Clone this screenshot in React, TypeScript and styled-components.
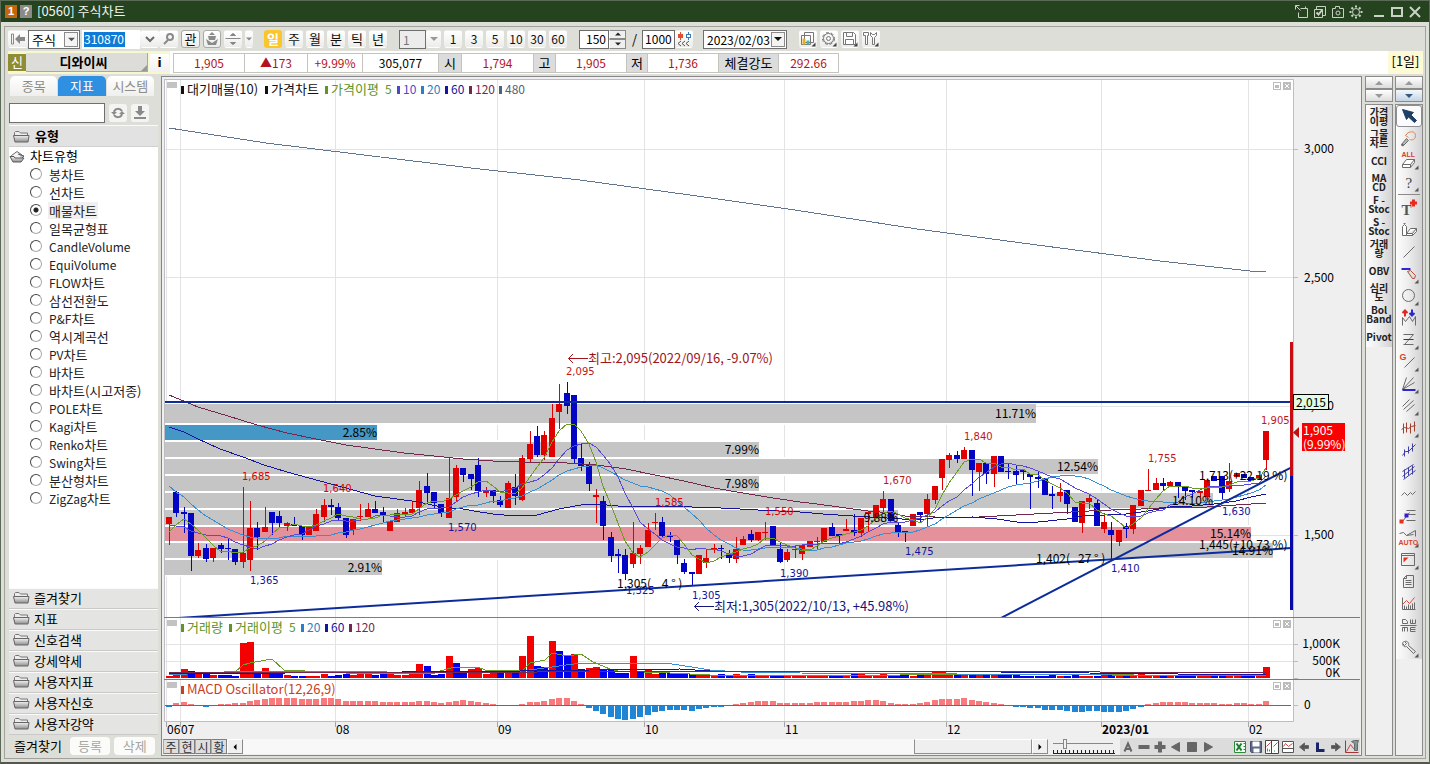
import React from "react";
import styled, { createGlobalStyle } from "styled-components";

const UI = '"Noto Sans CJK KR", sans-serif';

const GlobalStyle = createGlobalStyle`
  * { box-sizing: border-box; }
  body { margin: 0; font-family: ${UI}; font-size: 13px; line-height: 18px; color: #000; }
  button, input, select { font: inherit; color: inherit; margin: 0; padding: 0; border-radius: 0; }
  button { border: 0; background: none; }
  svg { display: block; flex: none; }
`;

/* ---------- window frame ---------- */

const Window = styled.div`
  min-height: 100vh;
  display: flex;
  flex-direction: column;
  background: #deded8;
  border: 1px solid #5b6a57;
  border-bottom: 2px solid #55564f;
`;

const TitleBar = styled.header`
  height: 21px;
  flex: none;
  display: flex;
  align-items: center;
  padding: 0 5px 0 4px;
  background: #24431e;
  color: #f0f4ee;
`;

const Title = styled.h1`
  margin: 0 auto 0 2px;
  font-size: 13px;
  font-weight: 400;
  line-height: 18px;
  padding-bottom: 2px;
`;

const Badge = styled.span<{ $bg: string }>`
  width: 12px;
  height: 13px;
  margin-right: 3px;
  background: ${(p) => p.$bg};
  color: #fff;
  font: bold 11px/13px "Liberation Sans", sans-serif;
  text-align: center;
`;

const TitleButton = styled.button`
  width: 18px;
  height: 18px;
  display: grid;
  place-items: center;
  color: #c9d2c5;
`;

const Body = styled.div`
  flex: 1;
  display: flex;
  padding: 4px 3px 3px;
`;

const Panel = styled.main`
  flex: 1;
  min-width: 0;
  display: flex;
  flex-direction: column;
  border: 1px solid #a2a29d;
  padding: 0 2px 2px 3px;
`;

/* ---------- toolbar ---------- */

const Toolbar = styled.div`
  height: 24px;
  flex: none;
  display: flex;
  align-items: center;
`;

const Spacer = styled.span<{ $w: number }>`
  flex: none;
  width: ${(p) => p.$w}px;
`;

const ToolButton = styled.button<{ $w?: number; $active?: boolean; $edge?: boolean; $tight?: boolean; $digits?: boolean }>`
  flex: none;
  width: ${(p) => p.$w ?? 18}px;
  height: 18px;
  margin-right: ${(p) => (p.$tight ? 0 : 3)}px;
  display: grid;
  place-items: center;
  border-radius: 3px;
  border: 1px solid ${(p) => (p.$edge ? "#a9a9a5" : "transparent")};
  background: ${(p) => (p.$active ? "#fbc52c" : "linear-gradient(#fff, #ececea)")};
  color: ${(p) => (p.$active ? "#fff" : "#111")};
  font-size: ${(p) => (p.$digits ? 12 : 13)}px;
  font-weight: ${(p) => (p.$active ? 700 : 400)};
  line-height: 16px;
`;

const SelectBox = styled.span<{ $w: number; $muted?: boolean; $digits?: boolean }>`
  flex: none;
  display: flex;
  align-items: center;
  width: ${(p) => p.$w}px;
  height: 19px;
  border: 1px solid #707070;
  background: ${(p) => (p.$muted ? "#ececec" : "#fff")};
  color: ${(p) => (p.$muted ? "#777" : "#000")};
  font-size: ${(p) => (p.$digits ? 12 : 13)}px;
  select {
    flex: 1;
    min-width: 0;
    height: 17px;
    border: 0;
    padding-left: 3px;
    background: transparent;
    appearance: none;
    outline: 0;
  }
`;

const Caret = styled.span<{ $boxed?: boolean }>`
  width: 14px;
  height: 15px;
  margin-right: 1px;
  display: grid;
  place-items: center;
  border: ${(p) => (p.$boxed ? "1px solid #8a8a8a" : "0")};
  background: ${(p) => (p.$boxed ? "#f4f4f2" : "transparent")};
`;

const CodeField = styled.span`
  flex: none;
  display: flex;
  align-items: center;
  width: 58px;
  height: 19px;
  margin-left: 2px;
  padding-left: 2px;
  background: #fff;
  input {
    width: 41px;
    height: 15px;
    border: 0;
    background: #0f7bd6;
    color: #fff;
    outline: 0;
    font-size: 12px;
  }
`;

const NumberField = styled.input<{ $w: number; $right?: boolean }>`
  flex: none;
  width: ${(p) => p.$w}px;
  height: 19px;
  border: 1px solid #6c6c6c;
  padding: 0 2px 1px;
  background: #fff;
  font-size: 12px;
  text-align: ${(p) => (p.$right ? "right" : "left")};
  outline: 0;
`;

const Stepper = styled.span`
  flex: none;
  width: 17px;
  height: 19px;
  display: flex;
  flex-direction: column;
  button {
    flex: 1;
    display: grid;
    place-items: center;
    background: #efefed;
    border: 1px solid #8a8a8a;
    border-left-color: #fff;
  }
`;

/* ---------- quote strip ---------- */

const QuoteStrip = styled.div`
  height: 23px;
  flex: none;
  display: flex;
  align-items: center;
  background: #fff;
`;

const StockName = styled.div`
  flex: none;
  display: flex;
  align-items: center;
  width: 162px;
  height: 23px;
  background: #f7f8cf;
`;

const NewMark = styled.span`
  width: 18px;
  height: 17px;
  background: #8f8c34;
  color: #fff;
  text-align: center;
  line-height: 16px;
`;

const NameButton = styled.button`
  width: 122px;
  height: 19px;
  display: flex;
  align-items: flex-end;
  background: #dcdcd8;
  border-right: 1px solid #a8a8a0;
  border-bottom: 1px solid #a8a8a0;
  font-weight: 700;
  line-height: 18px;
  span { flex: 1; }
`;

const InfoButton = styled.button`
  width: 19px;
  height: 18px;
  margin-left: 2px;
  background: linear-gradient(#fff, #f0f0f0);
  border-radius: 2px;
  font: bold 12px/18px "DejaVu Sans", sans-serif;
`;

const QuoteTable = styled.table`
  flex: none;
  width: 665px;
  margin-left: 3px;
  border-collapse: collapse;
  table-layout: fixed;
  th, td {
    height: 19px;
    padding: 0;
    border: 1px solid #c4c4bc;
    font-weight: 400;
    line-height: 17px;
    text-align: center;
  }
  th { background: #dcdcdc; }
`;

const Quote = styled.td<{ $tone?: string }>`
  color: ${(p) => p.$tone ?? "#b3141c"};
  font-size: 12px;
`;

const Period = styled.span`
  width: 35px;
  height: 23px;
  margin-left: auto;
  background: #fdfbd5;
  text-align: center;
  line-height: 20px;
`;

/* ---------- work area ---------- */

const Work = styled.div`
  flex: 1;
  min-height: 680px;
  display: flex;
  margin-top: 2px;
`;

const Sidebar = styled.aside`
  flex: none;
  width: 150px;
  margin-right: 3px;
  display: flex;
  flex-direction: column;
`;

const Tabs = styled.div`
  display: flex;
  gap: 1px;
  height: 20px;
  margin: 0 4px 6px 2px;
`;

const Tab = styled.button<{ $active?: boolean }>`
  flex: 1;
  border-radius: 5px 5px 0 0;
  background: ${(p) => (p.$active ? "#2f8fe0" : "linear-gradient(#fff, #efefed)")};
  color: ${(p) => (p.$active ? "#fff" : "#8c8c88")};
`;

const SearchRow = styled.div`
  display: flex;
  align-items: center;
  gap: 4px;
  height: 22px;
  padding-left: 1px;
  input {
    width: 96px;
    height: 20px;
    border: 1px solid #6f6f6f;
    background: #fff;
  }
`;

const SmallButton = styled.button`
  width: 18px;
  height: 18px;
  display: grid;
  place-items: center;
  border-radius: 3px;
  background: #f4f4f2;
`;

const TypeHeader = styled.h2`
  display: flex;
  align-items: center;
  gap: 5px;
  height: 22px;
  margin: 1px 0 0 1px;
  padding-left: 4px;
  background: #e2e2e2;
  border-top: 1px solid #fafafa;
  border-bottom: 1px solid #d0d0ce;
  font: bold 13px/20px ${UI};
`;

const Tree = styled.div`
  flex: 1;
  margin-left: 1px;
  background: #fff;
`;

const TreeRoot = styled.div`
  display: flex;
  align-items: center;
  gap: 4px;
  height: 18px;
`;

const TreeItem = styled.label<{ $selected?: boolean }>`
  display: flex;
  align-items: center;
  gap: 6px;
  height: 18px;
  padding-left: 21px;
  color: #222;
  input {
    width: 12px;
    height: 12px;
    appearance: none;
    border: 1px solid #444;
    border-right-color: #aaa;
    border-bottom-color: #aaa;
    border-radius: 50%;
    background: #fff;
  }
  input:checked { background: radial-gradient(#222 2px, #fff 3px); }
  > span { padding: 0 1px; height: 17px; line-height: 17px; background: ${(p) => (p.$selected ? "#f0f0f0" : "none")}; }
  small { font-size: 12px; }
`;

const FolderRow = styled.button`
  display: flex;
  align-items: center;
  gap: 4px;
  height: 21px;
  flex: none;
  margin-left: 1px;
  padding: 0 0 2px 4px;
  background: #e4e4e3;
  border-top: 1px solid #fafafa;
  border-bottom: 1px solid #c9c9c7;
  line-height: 17px;
`;

const SideFooter = styled.div`
  display: flex;
  align-items: center;
  height: 21px;
  flex: none;
  padding-left: 6px;
  span { width: 55px; }
`;

const GhostButton = styled.button`
  width: 41px;
  height: 18px;
  margin-left: 1px;
  margin-right: 3px;
  border-radius: 4px;
  background: #fbfbfa;
  color: #a6a69f;
`;

const ChartPanel = styled.section`
  flex: 1;
  min-width: 0;
  display: flex;
  flex-direction: column;
  margin-right: 3px;
  padding: 1px 1px 0;
  border: 1px solid #85858b;
  background: #efefef;
`;

const ChartSvg = styled.svg`
  flex: 1;
  width: 100%;
  min-height: 0;
`;

const Label = styled.text<{ $size?: number; $bold?: boolean }>`
  font-family: ${(p) => (p.$size === 10 ? '"DejaVu Sans", sans-serif' : UI)};
  font-size: ${(p) => p.$size ?? 12}px;
  font-weight: ${(p) => (p.$bold ? 700 : 400)};
  white-space: pre;
`;

const BottomBar = styled.div`
  height: 17px;
  flex: none;
  display: flex;
  align-items: center;
`;

const MiniTab = styled.button`
  width: 16px;
  height: 15px;
  border: 1px solid #7f7f7f;
  border-left-color: #aaa;
  background: #dedede;
  color: #333;
  font-size: 12px;
  line-height: 12px;
`;

const ScrollArrow = styled.button`
  width: 16px;
  height: 15px;
  display: grid;
  place-items: center;
  border: 1px solid #8a8a8a;
  border-top-color: #fff;
  border-left-color: #fff;
  background: #f0f0f0;
`;

const ScrollTrack = styled.div`
  flex: 1;
  display: flex;
  justify-content: flex-end;
  height: 15px;
  background: #f8f8f8;
`;

const ScrollThumb = styled.div`
  width: 118px;
  height: 15px;
  border: 1px solid #8f8f8f;
  border-top-color: #fff;
  background: #efefef;
`;

const ZoomSlider = styled.div`
  width: 64px;
  height: 17px;
  margin: 0 4px;
  padding: 1px 0 1px 1px;
  display: flex;
  flex-direction: column;
  justify-content: space-between;
  input {
    width: 60px;
    height: 10px;
    margin: 0;
    appearance: none;
    background: linear-gradient(#888, #888) 0 4px / 100% 1px no-repeat;
  }
  input::-webkit-slider-thumb {
    appearance: none;
    width: 4px;
    height: 10px;
    border: 1px solid #888;
    background: #f2f2f2;
  }
`;

const ChartTools = styled.div`
  width: 240px;
  height: 17px;
  display: flex;
  background: #dcdcdc;
  button { width: 16px; height: 17px; display: grid; place-items: center; }
`;

const Rail = styled.nav`
  flex: none;
  width: 28px;
  display: flex;
  flex-direction: column;
  & + & { margin-left: 2px; }
`;

const RailArrow = styled.button<{ $on?: boolean }>`
  height: 13px;
  display: grid;
  place-items: center;
  border: 1px solid #8b8b8b;
  background: ${(p) => (p.$on ? "linear-gradient(#f4f8fc, #c4d4e4)" : "linear-gradient(#fff, #dcdcdc)")};
`;

const RailBody = styled.div`
  flex: 1;
  margin-top: 2px;
  border: 1px solid #8b8b8b;
  background: #efefef;
`;

const RailItems = styled.div`
  background: linear-gradient(90deg, #fdfdfd, #eeeeee 45%, #d2d2d4);
`;

const TextTool = styled.button`
  width: 26px;
  height: 22px;
  display: flex;
  flex-direction: column;
  justify-content: center;
  align-items: center;
  color: #222;
  font: bold 10px/9px ${UI};
`;

const IconTool = styled.button<{ $active?: boolean }>`
  width: 26px;
  height: 22px;
  display: grid;
  place-items: center;
  border: ${(p) => (p.$active ? "1px solid #8d8d95" : "0")};
  border-radius: 3px;
  background: ${(p) => (p.$active ? "#fbfbfb" : "none")};
  svg { overflow: visible; }
`;

const Divider = styled.hr`
  margin: 1px 2px;
  border: 0;
  border-top: 1px solid #8a8a8a;
  height: 2px;
`;

/* ---------- icons ---------- */

const Stroke = ({ w = 16, h = 16, color = "#6b6b6b", sw = 1, children }: { w?: number; h?: number; color?: string; sw?: number; children: React.ReactNode }) => (
  <svg width={w} height={h} viewBox={`0 0 ${w} ${h}`} fill="none" stroke={color} strokeWidth={sw}>
    <g transform={sw === 1 ? "translate(0.5 0.5)" : undefined}>{children}</g>
  </svg>
);

const Tri = ({ dir, color = "#555", s = 7 }: { dir: "up" | "down" | "left" | "right"; color?: string; s?: number }) => {
  const d = { up: "M0 6L4 2L8 6Z", down: "M0 2L4 6L8 2Z", left: "M6 0L2 4L6 8Z", right: "M2 0L6 4L2 8Z" }[dir];
  return (
    <svg width={s} height={s} viewBox="0 0 8 8">
      <path d={d} fill={color} />
    </svg>
  );
};

const Folder = ({ open }: { open?: boolean }) => (
  <svg width="17" height="13" viewBox="0 0 17 13">
    <defs>
      <linearGradient id="folder" x2="0" y2="1"><stop stopColor="#f2f2f2" /><stop offset="1" stopColor="#8e8e8e" /></linearGradient>
    </defs>
    {open ? (
      <>
        <path d="M2.500 9V5.500L8 1.500L13 5L12 8" fill="#f4f4f4" stroke="#6a6a6a" />
        <path d="M1 6.500H5L6 8H15L12 12H4Z" fill="url(#folder)" stroke="#5a5a5a" />
        <path d="M9 4L15 6L13 8" fill="#bbb" stroke="#5a5a5a" />
      </>
    ) : (
      <>
        <path d="M1.500 10V2.500L2.500 1.500H6L7.500 3H14.500V6" fill="#ececec" stroke="#777" />
        <path d="M0.500 5.500H16L15 12H2Z" fill="url(#folder)" stroke="#666" />
      </>
    )}
  </svg>
);

const corner = <path d="M18 14V18H14Z" fill="#555" stroke="none" />;
const smallCorner = <path d="M15 11V15H11Z" fill="#444" stroke="none" />;

const drawTools: { name: string; more?: boolean; art: React.ReactNode }[] = [
  { name: "선택", art: <><path d="M2 2L13 5L10.500 7.500L16 13L14 15L8 9.500L6 12Z" fill="#1e3f66" stroke="#1e3f66" /></> },
  { name: "되돌리기", art: <><path d="M8 3L5 6L8 8M5 6C8 1 15 1 15 6C15 10 12 11 9 10" stroke="#e08a5a" /><path d="M1 15L6 9L8 11L3 16Z" fill="#b8b8b8" /><path d="M1 15L3 16" strokeWidth="2" /></> },
  { name: "전체삭제", more: true, art: <><text x="1" y="5" fontSize="7" fontWeight="700" fill="#d8432a" stroke="none" fontFamily="Liberation Sans">ALL</text><path d="M2 13L6 8H14L10 13ZM2 13V16H10V13M10 16L14 11V8" fill="#fff" /></> },
  { name: "도움말", more: true, art: <text x="5" y="14" fontSize="15" fill="#444" stroke="none" fontFamily="Liberation Serif">?</text> },
  { name: "문자", art: <><text x="1" y="15" fontSize="15" fontWeight="700" fill="#555" stroke="none" fontFamily="Liberation Serif">T</text><path d="M13 0V7M9.500 3.500H16.500" stroke="#e82a20" strokeWidth="3" /></> },
  { name: "지우개", art: <><path d="M2 5L4 3L6 5V14H2Z" fill="#fff" /><path d="M3 2H5" stroke="#d44" /><path d="M6 12L10 7H16L12 12ZM6 12V14H12L16 10V7M12 12V14" fill="#fff" /></> },
  { name: "추세선", art: <path d="M3 14L14 3" /> },
  { name: "수평선", more: true, art: <><path d="M1 3.500H10" stroke="#2a2ad0" strokeWidth="2" /><path d="M7 6L10 5L15 10L14 13L12 13Z" stroke="#b44" fill="#d4e8d4" /></> },
  { name: "원", more: true, art: <circle cx="8" cy="8" r="6" /> },
  { name: "패턴", art: <><path d="M2 16V8L5 12L9 7L12 12L15 7V16" /><path d="M4.500 7V1M2 3.500L4.500 1L7 3.500" stroke="#e02a20" strokeWidth="2" /><path d="M11.500 0V6M9 3.500L11.500 6L14 3.500" stroke="#2a2ad0" strokeWidth="2" /></> },
  { name: "되돌림선", more: true, art: <><path d="M3 3H13M3 13H13M13 3L4 13" /><path d="M3 8H13" stroke="#2a2ad0" /></> },
  { name: "기울기", more: true, art: <><text x="-1" y="6" fontSize="9" fontWeight="700" fill="#d8432a" stroke="none" fontFamily="Liberation Sans">G</text><path d="M4 14L14 4" /></> },
  { name: "부채꼴", more: true, art: <><path d="M2 14L6 2M2 14L13 2M2 14L14 7" /><path d="M2 14.500H15" stroke="#2a2ad0" strokeWidth="2" /></> },
  { name: "평행선", more: true, art: <path d="M2 9L9 2M3 12L13 3M6 14L14 7" /> },
  { name: "시간대", more: true, art: <path d="M3 4V14M6 3V13M10 4V14M14 2V12M1 10L4 8L8 9L11 7L15 6" stroke="#a04030" /> },
  { name: "회귀선", art: <path d="M4 15V8M8 12V5M12 10V2M2 14L5 10L8 10L15 3" stroke="#4040a0" /> },
  { name: "채널", art: <path d="M2 8L13 1M3 16L15 7M4 6V15M8 4V12M12 2V11M2 13L14 3" stroke="#4040a0" /> },
  { name: "지그재그", art: <path d="M1 10L4 7L7 10L10 7L12 9L15 6" /> },
  { name: "조정선", art: <><path d="M6 3H15M8 7H15M6 13H15M2 14L9 5" /><path d="M-1 12H3V16H-1Z" fill="#e8321e" stroke="none" /><path d="M4 6H8V10H4Z" fill="#3a1ad0" stroke="none" /></> },
  { name: "자동", more: true, art: <><path d="M-1 4L3 3L6 6L15 1V7M6 6L13 5" /><text x="-2" y="15" fontSize="7" fontWeight="700" fill="#d8432a" stroke="none" fontFamily="Liberation Sans">AUTO</text></> },
  { name: "화면", more: true, art: <><path d="M1 2H14V14H1ZM1 4H14" /><path d="M3 6H8L3 11Z" fill="#e8321e" stroke="none" /></> },
  { name: "문서", art: <path d="M6 2H13V14H3V5ZM6 2V5H3M5 7H11M5 9H11M5 11H11" /> },
  { name: "분석", art: <><path d="M2 2V14H15M4 14V10M6 14V11M8 14V9M10 14V10M12 14V8M14 14V7" /><path d="M2 9L6 5L9 8L14 2" stroke="#e04a3a" /></> },
  { name: "주기", art: <path d="M2 2H5L7 4V6H2ZM10 2V6H15V2M12 2V6M2 10V14M2 10H7V14M4 10V14M10 10H15M10 12H15M10 14H15M10 10V14M0 8H16" /> },
  { name: "설정", more: true, art: <path d="M3 2C1 5 3 8 6 7L13 14L15 12L8 6C9 3 6 1 4 2L6 4L4 6L2 4" /> },
];

const textTools = [["가격", "이평"], ["그물", "차트"], ["CCI"], ["MA", "CD"], ["F -", "Stoc"], ["S -", "Stoc"], ["거래", "량"], ["OBV"], ["심리", "도"], ["Bol", "Band"], ["Pivot"]];

/* ---------- chart data (y values are plot coordinates) ---------- */

type Candle = ["r" | "b", number, number, number, number];

// colour, high, body top, body bottom, low
const candles: Candle[] = [
  ["r", 517, 517, 524, 545], ["b", 491, 492, 513, 517], ["b", 507, 512, 514, 533], ["b", 513, 513, 556, 571], ["r", 543, 550, 556, 558],
  ["b", 544, 548, 559, 562], ["r", 548, 548, 558, 562], ["b", 543, 545, 549, 553], ["b", 539, 548, 549, 560], ["b", 549, 549, 562, 565],
  ["r", 487, 553, 562, 568], ["r", 501, 528, 560, 571], ["b", 522, 528, 537, 550], ["r", 507, 527, 532, 532], ["b", 512, 512, 523, 535],
  ["b", 511, 516, 523, 527], ["r", 522, 523, 526, 531], ["b", 517, 524, 526, 526], ["b", 526, 526, 535, 540], ["r", 527, 527, 535, 535],
  ["r", 509, 514, 531, 531], ["r", 499, 505, 517, 522], ["b", 499, 505, 507, 515], ["b", 503, 507, 518, 520], ["b", 518, 518, 535, 538],
  ["r", 519, 519, 530, 535], ["r", 504, 516, 517, 521], ["r", 503, 509, 517, 517], ["b", 501, 509, 513, 513], ["b", 507, 512, 516, 522],
  ["r", 521, 521, 531, 531], ["r", 509, 513, 522, 522], ["r", 508, 512, 514, 517], ["r", 501, 509, 513, 513], ["r", 481, 490, 508, 515],
  ["b", 473, 486, 493, 502], ["b", 492, 492, 503, 508], ["b", 504, 504, 513, 517], ["r", 457, 498, 518, 518], ["r", 465, 468, 497, 502],
  ["b", 468, 468, 475, 482], ["b", 474, 474, 479, 490], ["b", 458, 465, 491, 497], ["r", 487, 491, 493, 497], ["b", 490, 490, 496, 503],
  ["b", 496, 500, 505, 507], ["r", 481, 483, 508, 508], ["b", 474, 487, 496, 505], ["r", 455, 458, 500, 501], ["r", 431, 444, 459, 463],
  ["b", 426, 436, 455, 457], ["r", 431, 435, 455, 460], ["r", 404, 418, 457, 457], ["r", 384, 404, 412, 429], ["b", 382, 393, 406, 414],
  ["b", 395, 395, 459, 463], ["b", 444, 458, 466, 471], ["b", 462, 465, 484, 491], ["r", 489, 495, 497, 523], ["b", 496, 501, 526, 540],
  ["b", 532, 537, 556, 562], ["b", 549, 554, 556, 573], ["b", 549, 555, 574, 580], ["r", 522, 553, 564, 568], ["r", 545, 548, 554, 564],
  ["r", 523, 530, 547, 547], ["r", 513, 522, 523, 530], ["b", 517, 522, 536, 537], ["b", 532, 535, 537, 542], ["b", 540, 540, 555, 564],
  ["b", 559, 563, 572, 574], ["b", 572, 572, 574, 585], ["r", 555, 555, 574, 574], ["r", 549, 558, 563, 568], ["r", 544, 548, 549, 553],
  ["b", 545, 548, 549, 559], ["b", 550, 555, 558, 563], ["r", 537, 549, 559, 563], ["r", 536, 539, 545, 545], ["b", 530, 534, 540, 542],
  ["r", 532, 532, 540, 541], ["r", 522, 532, 533, 540], ["b", 526, 526, 545, 545], ["b", 542, 549, 562, 563], ["r", 549, 552, 560, 562],
  ["r", 546, 549, 550, 558], ["r", 545, 545, 554, 560], ["r", 541, 541, 547, 547], ["r", 537, 541, 542, 550], ["r", 528, 528, 542, 542],
  ["b", 523, 527, 536, 536], ["b", 534, 534, 536, 543], ["r", 519, 529, 531, 531], ["b", 514, 530, 533, 536], ["r", 518, 518, 533, 537],
  ["r", 512, 512, 514, 532], ["r", 505, 505, 518, 518], ["r", 491, 499, 508, 512], ["b", 499, 499, 521, 521], ["b", 523, 525, 532, 537],
  ["b", 531, 531, 532, 542], ["r", 514, 514, 526, 526], ["b", 512, 512, 515, 523], ["r", 494, 499, 514, 526], ["r", 486, 486, 500, 504],
  ["r", 459, 459, 478, 490], ["r", 453, 455, 460, 468], ["b", 451, 455, 459, 463], ["r", 447, 450, 459, 459], ["b", 450, 450, 470, 496],
  ["r", 463, 463, 472, 491], ["b", 463, 463, 474, 484], ["r", 456, 456, 474, 487], ["b", 456, 456, 472, 472], ["b", 463, 471, 472, 479],
  ["b", 465, 471, 475, 484], ["b", 470, 470, 472, 480], ["b", 474, 474, 477, 509], ["b", 472, 477, 479, 488], ["b", 478, 478, 495, 495],
  ["b", 486, 494, 496, 509], ["r", 483, 492, 496, 502], ["b", 490, 490, 504, 514], ["b", 507, 507, 522, 522], ["r", 501, 501, 523, 533],
  ["r", 495, 498, 502, 509], ["b", 500, 503, 526, 526], ["r", 513, 522, 529, 533], ["b", 522, 530, 535, 559], ["r", 530, 530, 542, 546],
  ["b", 523, 526, 529, 538], ["r", 505, 505, 529, 534], ["r", 490, 490, 506, 506], ["r", 469, 490, 491, 491], ["r", 478, 483, 490, 490],
  ["b", 478, 483, 486, 490], ["r", 481, 482, 486, 486], ["b", 482, 482, 487, 498], ["b", 487, 487, 491, 500], ["b", 490, 490, 492, 498],
  ["r", 491, 491, 493, 497], ["r", 480, 480, 497, 500], ["b", 476, 476, 481, 481], ["b", 476, 476, 493, 500], ["r", 463, 481, 489, 492],
  ["r", 473, 473, 477, 477], ["b", 474, 474, 478, 478], ["b", 477, 477, 481, 481], ["r", 475, 475, 479, 479], ["r", 431, 431, 460, 470],
];

const earlierCloses = [400, 410, 420, 430, 441, 452, 462, 472, 486, 497, 500, 510, 518, 528, 534, 548, 542, 533, 520];

const volumes = [
  2, 4, 9, 7, 5, 6, 3, 3, 3, 2, 35, 36, 5, 10, 7, 7, 3, 2, 2, 2, 2, 4, 2, 3, 4, 3, 4, 4, 3, 4, 4, 3, 3, 4, 14, 12, 3, 4, 22, 15,
  6, 9, 10, 4, 6, 6, 5, 5, 22, 42, 12, 11, 37, 27, 22, 24, 9, 10, 11, 8, 8, 5, 5, 22, 7, 9, 4, 7, 5, 4, 4, 4, 3, 3, 2, 4, 2, 4, 3, 4,
  3, 2, 3, 3, 2, 2, 3, 2, 2, 2, 3, 2, 3, 4, 5, 3, 3, 5, 3, 3, 3, 2, 4, 5, 6, 6, 5, 3, 4, 4, 3, 3, 4, 3, 4, 3, 2, 2, 2, 2,
  3, 2, 2, 3, 2, 2, 2, 3, 3, 2, 3, 3, 4, 3, 3, 3, 2, 2, 2, 2, 2, 2, 2, 2, 2, 2, 2, 3, 2, 11,
];

const volumeColors: Record<number, string> = { 1: "r", 2: "r", 39: "b", 41: "r", 42: "r", 44: "r", 51: "b", 53: "b", 55: "r", 57: "r", 64: "b" };

const oscillator = [
  -1, 2, 3, 1, 0, -1, 0, 1, 1, 2, 2, 4, 5, 6, 7, 7, 7, 7, 6, 6, 6, 7, 7, 6, 4, 4, 4, 4, 4, 3, 3, 3, 3, 3, 4, 4, 3, 2, 3, 4,
  5, 4, 3, 2, 1, 0, 0, 0, 1, 3, 3, 4, 6, 7, 7, 4, 1, -2, -5, -8, -11, -13, -14, -13, -11, -9, -6, -5, -4, -4, -4, -5, -3, -2, -1, -1, 0, 1, 2, 3,
  4, 4, 4, 2, 2, 2, 2, 2, 3, 3, 3, 3, 3, 4, 4, 5, 5, 4, 2, 1, 1, 1, 2, 3, 5, 6, 6, 6, 7, 5, 4, 3, 2, 1, 0, -1, -1, -2, -2, -4,
  -4, -4, -5, -6, -6, -5, -5, -6, -6, -6, -5, -3, -1, 1, 2, 3, 3, 3, 3, 2, 2, 2, 2, 1, 1, 2, 2, 1, 1, 4,
];

// top, height, right edge, share, colour
const profile: [number, number, number, string, string][] = [
  [404, 19, 1036, "11.71%", "#c5c5c5"], [425, 15, 377, "2.85%", "#4597c6"], [442, 15, 759, "7.99%", "#c5c5c5"], [459, 15, 1098, "12.54%", "#c5c5c5"],
  [476, 15, 759, "7.98%", "#c5c5c5"], [493, 15, 1213, "14.10%", "#c5c5c5"], [510, 15, 898, "9.88%", "#c5c5c5"], [527, 14, 1251, "15.14%", "#e4919b"],
  [543, 15, 1273, "14.91%", "#c5c5c5"], [560, 15, 382, "2.91%", "#c5c5c5"],
];

const RED = "#e00000";
const BLUE = "#0404c4";
const PEAK = "#c01818";
const NAVY = "#14149c";
const GREEN = "#5f9426";
const step = (1266 - 169) / 149;
const xAt = (i: number) => Math.round(169 + i * step);

const movingAverage = (n: number) => {
  const closes = [...earlierCloses, ...candles.map((c) => (c[0] === "r" ? c[2] : c[3]))];
  return candles
    .map((_, i) => {
      const end = i + earlierCloses.length + 1;
      const sum = closes.slice(end - n, end).reduce((a, b) => a + b, 0);
      return `${xAt(i)},${Math.round(sum / n)}`;
    })
    .join(" ");
};

const priceLines: [string, string][] = [
  ["169,128 266,143 364,155 471,168 580,180 690,195 795,210 917,229 1060,248 1160,261 1250,271 1266,272", "#5f7590"],
  ["169,395 198,407 228,416 257,425 287,433 316,439 346,445 375,449 404,453 434,456 463,459 493,461 522,462 567,463 596,465 626,469 655,475 684,481 714,488 743,493 773,498 800,502 817,504 846,508 868,511 891,513 905,516 935,517 979,517 1016,515 1053,513 1089,511 1111,510 1141,509 1178,507 1207,507 1236,505 1266,503", "#74284f"],
  ["169,427 184,432 198,439 220,449 243,457 264,465 287,472 309,478 331,484 353,490 375,496 397,499 419,502 441,507 463,509 480,512 493,514 515,516 537,515 559,509 581,505 596,504 618,506 640,507 670,506 692,507 721,508 758,510 800,512 823,514 853,516 887,518 917,520 933,518 973,517 997,519 1017,522 1038,522 1067,519 1082,516 1104,515 1126,514 1148,511 1170,507 1192,506 1214,504 1236,501 1251,497 1266,494", "#1414a0"],
  [movingAverage(20), "#3a8fd0"],
  [movingAverage(10), "#5a4ad8"],
  [movingAverage(5), "#6c9c24"],
];

const volumeLines: [string, string][] = [
  ["169,674 235,672 243,665 250,663 272,659 284,670 367,674 440,671 455,667 478,667 485,670 522,671 530,663 545,660 552,653 567,656 581,654 593,662 610,669 618,671 670,673 710,675 900,675 1000,674 1266,676", "#6c9c24"],
  ["169,675 243,671 385,671 390,674 480,672 522,671 552,667 581,663 665,663 692,667 710,670 740,672 800,673 1266,676", "#3a8fd0"],
  ["169,674 520,671 590,670 680,669 710,671 910,671 1000,672 1266,675", "#1414a0"],
  ["169,673 910,671 1100,672 1266,672", "#74284f"],
];

const peaks: [number, number, string, string][] = [
  [242, 480, "1,685", RED], [323, 492, "1,640", RED], [566, 375, "2,095", PEAK], [655, 506, "1,585", RED], [765, 515, "1,550", RED],
  [883, 484, "1,670", PEAK], [964, 440, "1,840", PEAK], [1148, 462, "1,755", PEAK], [1261, 424, "1,905", PEAK],
  [250, 584, "1,365", NAVY], [448, 531, "1,570", NAVY], [626, 594, "1,325", NAVY], [692, 599, "1,305", NAVY],
  [780, 577, "1,390", NAVY], [905, 555, "1,475", NAVY], [1111, 572, "1,410", NAVY], [1222, 515, "1,630", NAVY],
];

const notes: [number, number, string, string, number][] = [
  [617, 588, "1,305(    4 ° )", "#000", 12], [1036, 563, "1,402(   27 ° )", "#000", 12], [1199, 480, "1,713(+22.19 %)", "#000", 12], [1199, 549, "1,445(+10.73 %)", "#000", 12],
  [588, 363, "최고:2,095(2022/09/16, -9.07%)", "#a0141c", 13], [714, 611, "최저:1,305(2022/10/13, +45.98%)", "#14147c", 13],
];

const legends: { x: number; y: number; text: string; color: string; size?: number; plain?: boolean }[] = [
  { x: 187, y: 94, text: "대기매물(10)", color: "#111", size: 13 },
  { x: 271, y: 94, text: "가격차트", color: "#111", size: 13 },
  { x: 331, y: 94, text: "가격이평", color: GREEN, size: 13 },
  { x: 385, y: 94, text: "5", color: GREEN, plain: true },
  { x: 403, y: 94, text: "10", color: "#4a4ac8" },
  { x: 427, y: 94, text: "20", color: "#2a80c8" },
  { x: 451, y: 94, text: "60", color: NAVY },
  { x: 475, y: 94, text: "120", color: "#74284f" },
  { x: 505, y: 94, text: "480", color: "#4f6378" },
  { x: 187, y: 632, text: "거래량", color: GREEN, size: 13 },
  { x: 235, y: 632, text: "거래이평", color: GREEN, size: 13 },
  { x: 289, y: 632, text: "5", color: GREEN, plain: true },
  { x: 307, y: 632, text: "20", color: "#2a80c8" },
  { x: 331, y: 632, text: "60", color: NAVY },
  { x: 355, y: 632, text: "120", color: "#74284f" },
  { x: 187, y: 694, text: "MACD Oscillator(12,26,9)", color: "#c8401c", size: 13 },
];

const months: [number, string][] = [[166, "06"], [180, "07"], [335, "08"], [497, "09"], [644, "10"], [784, "11"], [946, "12"], [1101, "2023/01"], [1248, "02"]];

const PaneButtons = ({ y }: { y: number }) => (
  <g fill="none" stroke="#bcbcbc">
    <rect x="1273.500" y={y + 0.5} width="7" height="7" />
    <rect x="1275" y={y + 3} width="4" height="3" fill="#bcbcbc" stroke="none" />
    <rect x="1283" y={y} width="8" height="8" fill="#bcbcbc" stroke="none" />
    <path d={`M1285 ${y + 2}l4 4m0 -4l-4 4`} stroke="#fff" />
  </g>
);

const Chart = () => (
  <ChartSvg viewBox="163 78 1197 660" preserveAspectRatio="xMinYMin meet" role="img" aria-label="디와이씨 주식차트">
    <defs>
      <clipPath id="price"><rect x="165" y="80" width="1126" height="537" /></clipPath>
    </defs>
    <rect x="165" y="79" width="1128" height="642" fill="#fff" />
    <path d="M164.500 79V721.500H1293.500V79.500H164" fill="none" stroke="#bdbdc2" />
    <g stroke="#e3e3e6" shapeRendering="crispEdges">
      {months.map(([x]) => <path key={x} d={`M${x}.500 80V721`} />)}
      {[149, 277, 406, 535, 644, 661].map((y) => <path key={y} d={`M165 ${y}.500H1293`} />)}
    </g>
    <g stroke="#bcbcc0" shapeRendering="crispEdges">
      {[149, 277, 406, 535, 644, 661, 678, 705].map((y) => <path key={y} d={`M1294 ${y}.500H1298`} />)}
    </g>
    <g stroke="#a5a5a5">{months.map(([x]) => <path key={x} d={`M${x}.500 722V727`} />)}</g>

    <g clipPath="url(#price)">
      <g shapeRendering="crispEdges">
        {profile.map(([y, h, end]) => <rect key={y} x="165" y={y - 2} width={end - 165} height={h + 4} fill="#fff" />)}
        {profile.map(([y, h, end, , fill]) => <rect key={y} x="165" y={y} width={end - 165} height={h} fill={fill} />)}
        {candles.map(([c, high, top, bottom, low], i) => (
          <g key={i} fill={c === "r" ? RED : BLUE}>
            <rect x={xAt(i)} y={high} width="1" height={low - high} />
            <rect x={xAt(i) - 3} y={top} width="6" height={Math.max(bottom - top, 1)} />
          </g>
        ))}
      </g>
      <g fill="none" strokeWidth="1" shapeRendering="crispEdges">
        {priceLines.map(([points, color]) => <polyline key={color} points={points} stroke={color} />)}
      </g>
      <g stroke="#0c2c9c" strokeWidth="2">
        <path d="M165 402H1292" />
        <path d="M178 618L1292 548" />
        <path d="M1001 618L1292 467" />
      </g>
      {profile.map(([y, h, end, text]) => <Label key={y} x={end} y={y + Math.round(h / 2) + 4} textAnchor="end">{text}</Label>)}
      {peaks.map(([x, y, text, fill]) => <Label key={x} $size={10} x={x} y={y} fill={fill}>{text}</Label>)}
    </g>
    {notes.map(([x, y, text, fill, size]) => <Label key={text} $size={size} x={x} y={y} fill={fill}>{text}</Label>)}
    <path d="M588 358.500H568.500M573 354L568.500 358.500L573 363" fill="none" stroke="#a0141c" />
    <path d="M714 606.500H694.500M699 602L694.500 606.500L699 611" fill="none" stroke="#14147c" />

    <rect x="1290" y="342" width="3" height="134" fill="#c80c10" />
    <rect x="1290" y="476" width="3" height="134" fill="#0808a8" />

    <g shapeRendering="crispEdges">
      {volumes.map((h, i) => (
        <rect key={i} x={xAt(i) - 3} y={678 - h} width="7" height={h} fill={(volumeColors[i] ?? candles[i][0]) === "r" ? "#f40000" : "#0000f0"} />
      ))}
      <g fill="none">{volumeLines.map(([points, color]) => <polyline key={color} points={points} stroke={color} />)}</g>
      <rect x="165" y="705" width="1126" height="1" fill="#b8502c" />
      {oscillator.map((v, i) => (
        <rect key={i} x={xAt(i) - 3} y={v > 0 ? 705 - v : 706} width="6" height={Math.abs(v)} fill={v > 0 ? "#f97a7c" : "#2086d4"} />
      ))}
      <rect x="164" y="617" width="1196" height="1" fill="#7c7c80" />
      <rect x="164" y="679" width="1196" height="1" fill="#7c7c80" />
    </g>

    {[82, 620, 682].map((y) => <rect key={y} x="167" y={y} width="10" height="6" fill="#c3c3c3" />)}
    {[82, 620, 682].map((y) => <PaneButtons key={y} y={y} />)}
    {legends.map(({ x, y, text, color, size, plain }) => (
      <g key={`${x}-${y}`} fill={color}>
        {!plain && <rect x={x - 6} y={y - 8} width="3" height="8" />}
        <Label $size={size} x={x} y={y}>{text}</Label>
      </g>
    ))}

    <Label x="1304" y="153">3,000</Label>
    <Label x="1304" y="282">2,500</Label>
    <Label x="1304" y="410">2,000</Label>
    <Label x="1304" y="539">1,500</Label>
    <Label x="1340" y="648" textAnchor="end">1,000K</Label>
    <Label x="1340" y="665" textAnchor="end">500K</Label>
    <Label x="1340" y="677" textAnchor="end">0K</Label>
    <Label x="1304" y="709">0</Label>
    <rect x="1293.500" y="394.500" width="35" height="15" fill="#e2fde2" stroke="#000" />
    <Label x="1296" y="407">2,015</Label>
    <path d="M1299 427V438L1293 432.500Z" fill="#c01010" />
    <rect x="1302" y="423" width="43" height="28" fill="#fa0000" />
    <Label x="1303" y="435" fill="#fff">1,905</Label>
    <Label x="1303" y="449" fill="#fff">(9.99%)</Label>
    {months.map(([x, text]) => <Label key={x} x={x + 1} y="734" $bold={text.length > 2}>{text}</Label>)}
  </ChartSvg>
);

/* ---------- sections ---------- */

const chartTypes = [["", "봉차트"], ["", "선차트"], ["", "매물차트"], ["", "일목균형표"], ["CandleVolume", ""], ["EquiVolume", ""], ["FLOW", "차트"], ["", "삼선전환도"], ["P&F", "차트"], ["", "역시계곡선"], ["PV", "차트"], ["", "바차트"], ["", "바차트(시고저종)"], ["POLE", "차트"], ["Kagi", "차트"], ["Renko", "차트"], ["Swing", "차트"], ["", "분산형차트"], ["ZigZag", "차트"]];

const MainToolbar = () => (
  <Toolbar>
    <ToolButton aria-label="처음으로" $w={20} $tight>
      <svg width="16" height="12" viewBox="0 0 16 12"><path d="M1.500 1V11H3.500V1Z" fill="none" stroke="#888" /><path d="M5 6L10 1V4H15V8H10V11Z" fill="#888" /></svg>
    </ToolButton>
    <SelectBox $w={52}>
      <select aria-label="종목 구분" defaultValue="주식"><option>주식</option></select>
      <Caret $boxed><Tri dir="down" /></Caret>
    </SelectBox>
    <CodeField><input aria-label="종목코드" defaultValue="310870" /></CodeField>
    <ToolButton aria-label="최근 종목" $w={19} $tight><Stroke w={10} h={8} sw={2}><path d="M1 2L5 6L9 2" /></Stroke></ToolButton>
    <ToolButton aria-label="종목 검색" $w={19}><Stroke w={12} h={12} sw={2} color="#8a8a8a"><circle cx="7" cy="4" r="3" /><path d="M5 7L1 11" /></Stroke></ToolButton>
    <ToolButton $edge $w={19}>관</ToolButton>
    <ToolButton $edge aria-label="연동">
      <svg width="12" height="14" viewBox="0 0 12 14" fill="#8a8a8a"><path d="M6 0L9 3H3Z" /><path d="M2 4H10L9 8H3ZM0 7L6 11L12 7L10 13H2Z" /></svg>
    </ToolButton>
    <ToolButton aria-label="위아래"><Stroke w={16} h={14} color="#888"><path d="M0 6H15" /><path d="M5 3L7.500 1L10 3ZM5 10L7.500 12L10 10Z" fill="#777" /></Stroke></ToolButton>
    <ToolButton $w={8} aria-label="더보기"><Tri dir="down" s={6} color="#888" /></ToolButton>
    <Spacer $w={8} />
    {["일", "주", "월", "분", "틱", "년"].map((t, i) => <ToolButton key={t} $active={i === 0}>{t}</ToolButton>)}
    <Spacer $w={9} />
    <SelectBox $w={27} $muted $digits><select aria-label="주기 값" defaultValue="1"><option>1</option></select></SelectBox>
    <ToolButton $w={15} aria-label="주기 목록"><Tri dir="down" s={8} color="#999" /></ToolButton>
    {["1", "3", "5", "10", "30", "60"].map((t) => <ToolButton key={t} $digits>{t}</ToolButton>)}
    <Spacer $w={9} />
    <NumberField $w={30} $right aria-label="표시 개수" defaultValue="150" />
    <Stepper>
      <button aria-label="증가"><Tri dir="up" s={6} color="#222" /></button>
      <button aria-label="감소"><Tri dir="down" s={6} color="#222" /></button>
    </Stepper>
    <Spacer $w={6} />/<Spacer $w={5} />
    <NumberField $w={33} aria-label="전체 개수" defaultValue="1000" />
    <ToolButton aria-label="이어보기">
      <svg width="15" height="15" viewBox="0 0 15 15" fill="none"><path d="M3.500 0V8" stroke="#e0502c" /><rect x="1" y="2" width="5" height="4" fill="#e0502c" /><path d="M11.500 0V8" stroke="#3a78b8" /><rect x="9.500" y="2.500" width="4" height="3" fill="#fff" stroke="#3a78b8" /><path d="M4 9L1 11.500L4 14M8 9L5 11.500L8 14M12 9L9 11.500L12 14" stroke="#555" /></svg>
    </ToolButton>
    <Spacer $w={7} />
    <SelectBox $w={84} $digits>
      <select aria-label="날짜" defaultValue="2023/02/03"><option>2023/02/03</option></select>
      <Caret $boxed><Tri dir="down" color="#111" s={8} /></Caret>
    </SelectBox>
    <Spacer $w={12} />
    <ToolButton aria-label="차트 추가"><Stroke color="#777"><path d="M4 1H13V11H4ZM1 4H10V13H1Z" fill="#fff" /><path d="M2 13V7H5V13Z" fill="#e8b020" stroke="none" /><path d="M6 13V9H9V13Z" fill="#48b0b0" stroke="none" />{smallCorner}</Stroke></ToolButton>
    <ToolButton aria-label="설정"><Stroke color="#777"><circle cx="7" cy="7" r="6" strokeDasharray="3 2" /><circle cx="7" cy="7" r="5" /><circle cx="7" cy="7" r="2" />{smallCorner}</Stroke></ToolButton>
    <ToolButton aria-label="저장"><Stroke color="#777"><path d="M1 1H11L13 3V13H1ZM4 1V5H10V1M3 13V8H11V13" fill="#fff" />{smallCorner}</Stroke></ToolButton>
    <ToolButton aria-label="도구"><Stroke color="#777"><path d="M0 1H5V4H4V13H2V4H0ZM7 1V4L9 6V13H11V6L13 4V1L11 3H9Z" fill="#fff" />{smallCorner}</Stroke></ToolButton>
  </Toolbar>
);

const quoteCells: [string, number, string?][] = [
  ["1,905", 71], ["▲173", 63], ["+9.99%", 55], ["305,077", 76, "#000"], ["시", 23, "th"], ["1,794", 72], ["고", 22, "th"],
  ["1,905", 71], ["저", 21, "th"], ["1,736", 71], ["체결강도", 60, "th"], ["292.66", 60],
];

const QuoteBar = () => (
  <QuoteStrip>
    <StockName>
      <NewMark>신</NewMark>
      <NameButton><span>디와이씨</span><svg width="6" height="6" viewBox="0 0 6 6"><path d="M6 0V6H0Z" fill="#999" /></svg></NameButton>
      <InfoButton>i</InfoButton>
    </StockName>
    <QuoteTable>
      <colgroup>{quoteCells.map(([, w], i) => <col key={i} width={w} />)}</colgroup>
      <tbody>
        <tr>{quoteCells.map(([t, , tone], i) => (tone === "th" ? <th key={i} scope="row">{t}</th> : <Quote key={i} $tone={tone}>{t}</Quote>))}</tr>
      </tbody>
    </QuoteTable>
    <Period>[1일]</Period>
  </QuoteStrip>
);

const SidePanel = () => (
  <Sidebar>
    <Tabs role="tablist">
      <Tab role="tab">종목</Tab>
      <Tab role="tab" aria-selected $active>지표</Tab>
      <Tab role="tab">시스템</Tab>
    </Tabs>
    <SearchRow>
      <input aria-label="지표 검색" />
      <SmallButton aria-label="새로고침"><Stroke w={14} h={14} sw={2} color="#8a8a8a"><path d="M3 6C4 2 9 2 11 5M11 8C10 12 5 12 3 9" /><path d="M0 6H6L3 9ZM8 8H14L11 5Z" fill="#8a8a8a" stroke="none" /></Stroke></SmallButton>
      <SmallButton aria-label="내려받기"><svg width="14" height="14" viewBox="0 0 14 14" fill="#8a8a8a"><path d="M5 0H9V5H12L7 10L2 5H5ZM1 11H13V13H1Z" /></svg></SmallButton>
    </SearchRow>
    <TypeHeader><Folder />유형</TypeHeader>
    <Tree>
      <TreeRoot><Folder open />차트유형</TreeRoot>
      {chartTypes.map(([latin, hangul]) => {
        const selected = hangul === "매물차트";
        return (
          <TreeItem key={latin + hangul} $selected={selected}>
            <input type="radio" name="chart-type" defaultChecked={selected} />
            <span><small>{latin}</small>{hangul}</span>
          </TreeItem>
        );
      })}
    </Tree>
    {["즐겨찾기", "지표", "신호검색", "강세약세", "사용자지표", "사용자신호", "사용자강약"].map((t) => (
      <FolderRow key={t}><Folder />{t}</FolderRow>
    ))}
    <SideFooter><span>즐겨찾기</span><GhostButton>등록</GhostButton><GhostButton>삭제</GhostButton></SideFooter>
  </Sidebar>
);

const bottomIcons: [string, React.ReactNode][] = [
  ["자동", <path d="M4 12L7.500 4L11 12M5 9.500H10" strokeWidth="2" />],
  ["축소", <path d="M2 7.500H13" strokeWidth="4" />],
  ["확대", <path d="M2 7.500H13M7.500 2V13" strokeWidth="4" />],
  ["이전", <path d="M11 3V12L3 7.500Z" fill="#666" />],
  ["정지", <path d="M3 3H12V12H3Z" fill="#666" />],
  ["다음", <path d="M4 3V12L12 7.500Z" fill="#666" />],
  ["엑셀", <><path d="M2 2H13V13H2Z" fill="#f0fff0" stroke="#2c8c3c" /><path d="M4 4L9 11M9 4L4 11" stroke="#1f7a30" strokeWidth="2" /><path d="M11 4H13M11 7H13M11 10H13" stroke="#2c8c3c" /></>],
  ["저장", <><path d="M2 2H13V13H3L2 12Z" fill="#5f6a88" stroke="#44506c" /><path d="M4 2H11V7H4ZM5 9H11V13H5Z" fill="#fff" stroke="none" /></>],
  ["분할", <><path d="M1 1H14V14H1ZM7 1V14" fill="#fff" stroke="#444" /><path d="M2 7L6 3M9 7L13 3" stroke="#c44" /><path d="M3 12V9M5 12V10M10 12V11" stroke="#393" /></>],
  ["겹침", <><path d="M2 2H13V13H2ZM2 9H13" fill="#fff" stroke="#555" /><path d="M3 7L5 4L8 7L12 4" stroke="#c44" /></>],
  ["왼쪽", <path d="M3 7.500L8 3.500V6H12V9H8V11.500Z" fill="#555" />],
  ["로그", <path d="M5 3V11H12" stroke="#1a2468" strokeWidth="3" />],
  ["오른쪽", <path d="M12 7.500L7 3.500V6H3V9H7V11.500Z" fill="#555" />],
  ["차트설정", <><path d="M1 1V13H14" stroke="#a33" /><path d="M2 12L6 5L9 9L12 7" stroke="#c44" /><path d="M7 2L10 1H14L13 4V11H10V4Z" fill="#7a9a9a" /></>],
];

const ChartFooter = () => (
  <BottomBar>
    {["주", "현", "시", "황"].map((t) => <MiniTab key={t}>{t}</MiniTab>)}
    <ScrollArrow aria-label="왼쪽으로"><Tri dir="left" color="#000" s={6} /></ScrollArrow>
    <ScrollTrack><ScrollThumb /></ScrollTrack>
    <ScrollArrow aria-label="오른쪽으로"><Tri dir="right" color="#000" s={6} /></ScrollArrow>
    <ZoomSlider>
      <input type="range" aria-label="확대 비율" defaultValue="18" />
      <svg width="62" height="4" viewBox="0 0 62 4"><path d="M0 3.500H62" stroke="#222" /><path d="M0 1.500H62" stroke="#222" strokeWidth="3" strokeDasharray="1 3" /></svg>
    </ZoomSlider>
    <ChartTools>
      {bottomIcons.map(([name, art], i) => (
        <React.Fragment key={name}>
          {i === 6 && <Spacer $w={16} />}
          <button aria-label={name}><Stroke color="#666">{art}</Stroke></button>
        </React.Fragment>
      ))}
    </ChartTools>
  </BottomBar>
);

export default function App() {
  return (
    <Window>
      <GlobalStyle />
      <TitleBar>
        <Badge $bg="#c4660c">1</Badge>
        <Badge $bg="#8a8a88">?</Badge>
        <Title>[0560] 주식차트</Title>
        <TitleButton aria-label="분리"><Stroke w={14} h={14} color="currentColor"><path d="M0 0H4M0 0V4M0 0L5 5M5 3H12V12H3V7M10 1V3" /></Stroke></TitleButton>
        <TitleButton aria-label="복사"><Stroke w={14} h={14} color="currentColor"><path d="M1 4H9V12H1ZM3 4V1H12V10H9" /><path d="M3 7L5 9L9 4" strokeWidth="2" /></Stroke></TitleButton>
        <TitleButton aria-label="화면 캡처"><Stroke w={14} h={14} color="currentColor"><path d="M1 3H4V1H8V3H12V12H1Z" /><circle cx="6.500" cy="7.500" r="2" /></Stroke></TitleButton>
        <TitleButton aria-label="설정"><Stroke w={14} h={14} color="currentColor"><circle cx="6.500" cy="6.500" r="3.500" /><path d="M6.500 0V2M6.500 11V13M0 6.500H2M11 6.500H13M2 2L3.500 3.500M9.500 9.500L11 11M2 11L3.500 9.500M9.500 3.500L11 2" strokeWidth="2" /></Stroke></TitleButton>
        <Spacer $w={5} />
        <TitleButton aria-label="최소화"><Stroke w={12} h={12} color="currentColor" sw={2}><path d="M1 10H11" /></Stroke></TitleButton>
        <TitleButton aria-label="최대화"><Stroke w={12} h={12} color="currentColor" sw={2}><path d="M1 2H11V10H1Z" /></Stroke></TitleButton>
        <TitleButton aria-label="닫기"><Stroke w={12} h={12} color="currentColor" sw={2}><path d="M1 1L11 11M11 1L1 11" /></Stroke></TitleButton>
      </TitleBar>
      <Body>
        <Panel>
          <MainToolbar />
          <QuoteBar />
          <Work>
            <SidePanel />
            <ChartPanel>
              <Chart />
              <ChartFooter />
            </ChartPanel>
            <Rail aria-label="지표 바로가기">
              <RailArrow aria-label="위"><Tri dir="up" color="#999" s={8} /></RailArrow>
              <RailArrow aria-label="아래"><Tri dir="down" color="#999" s={8} /></RailArrow>
              <RailBody>
                <RailItems>
                  {textTools.map((lines) => <TextTool key={lines.join("")}>{lines.map((l) => <span key={l}>{l}</span>)}</TextTool>)}
                </RailItems>
              </RailBody>
            </Rail>
            <Rail aria-label="그리기 도구">
              <RailArrow aria-label="위"><Tri dir="up" color="#999" s={8} /></RailArrow>
              <RailArrow $on aria-label="아래"><Tri dir="down" color="#345a80" s={8} /></RailArrow>
              <RailBody>
                <RailItems>
                  {drawTools.map((t, i) => (
                    <React.Fragment key={t.name}>
                      {i === 4 && <Divider />}
                      <IconTool $active={i === 0} aria-label={t.name}><Stroke w={18} h={18}>{t.art}{t.more && corner}</Stroke></IconTool>
                    </React.Fragment>
                  ))}
                </RailItems>
              </RailBody>
            </Rail>
          </Work>
        </Panel>
      </Body>
    </Window>
  );
}
